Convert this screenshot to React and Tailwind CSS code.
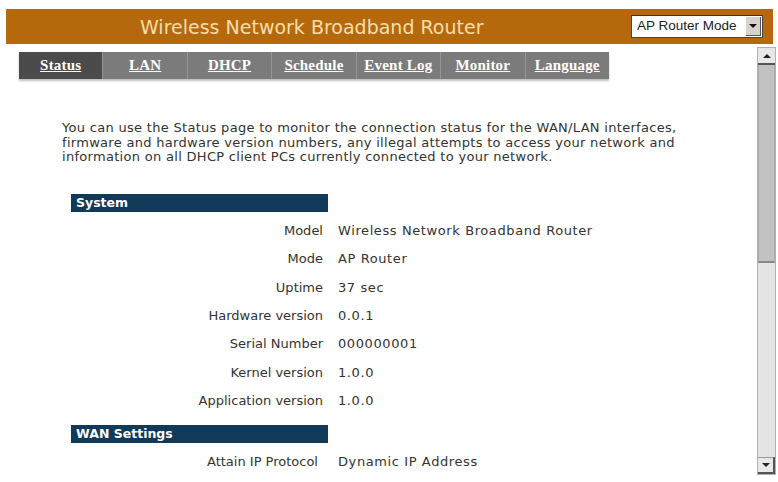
import React from 'react';

const tabs = ['Status', 'LAN', 'DHCP', 'Schedule', 'Event Log', 'Monitor', 'Language'];

const systemRows = [
  ['Model', 'Wireless Network Broadband Router'],
  ['Mode', 'AP Router'],
  ['Uptime', '37 sec'],
  ['Hardware version', '0.0.1'],
  ['Serial Number', '000000001'],
  ['Kernel version', '1.0.0'],
  ['Application version', '1.0.0'],
];

function SectionBar({ title }) {
  return (
    <div className="w-[257px] h-[18px] bg-[#10395a] pl-[5px] text-white font-bold text-[12.5px] leading-[18px]">
      {title}
    </div>
  );
}

function InfoRow({ label, value }) {
  return (
    <div className="flex h-[28.3px] items-center text-[13px] text-[#333]">
      <div className="w-[257px] pr-[5px] text-right">{label}</div>
      <div className="pl-[10px] tracking-[0.6px]">{value}</div>
    </div>
  );
}

function ScrollBar() {
  return (
    <div className="w-[19px] h-[428px] mt-[3px] flex flex-col border border-[#b0b0b0] bg-[#e6e6e6]">
      <div className="h-[17px] bg-[#e8e8e8] border-b-2 border-[#555] flex items-center justify-center">
        <div className="w-0 h-0 border-l-[4px] border-r-[4px] border-b-[4px] border-l-transparent border-r-transparent border-b-[#222]" />
      </div>
      <div className="h-[198px] bg-[#c2c2c2] border-x border-[#aaa] border-b-2 border-b-[#888]" />
      <div className="flex-1 bg-[#e4e4e4]" />
      <div className="h-[17px] bg-[#e8e8e8] border-t border-[#999] border-r-2 border-b-2 border-r-[#555] border-b-[#555] flex items-center justify-center">
        <div className="w-0 h-0 border-l-[4px] border-r-[4px] border-t-[4px] border-l-transparent border-r-transparent border-t-[#222]" />
      </div>
    </div>
  );
}

export default function App() {
  return (
    <div className="w-[778px] h-[482px] bg-white overflow-hidden pt-[9px]" style={{ fontFamily: '"DejaVu Sans", Verdana, sans-serif' }}>
      {/* top banner */}
      <div className="ml-[6px] w-[767px] h-[35px] bg-[#b5690c] flex items-center">
        <div className="pl-[134px] pt-[1px] text-[19px] text-[#f8ddab]">Wireless Network Broadband Router</div>
        <div className="ml-auto mr-[10px] w-[132px] h-[23px] bg-white border border-[#444] border-t-[#333] flex items-center">
          <span className="flex-1 pl-[5px] text-[13.5px] text-[#222]" style={{ fontFamily: '"Liberation Sans", Arial, sans-serif' }}>AP Router Mode</span>
          <div className="w-[15px] h-[19px] mr-[1px] bg-[#d6d3cc] border-r border-b border-[#555] flex items-center justify-center">
            <div className="w-0 h-0 border-l-[4px] border-r-[4px] border-t-[4px] border-l-transparent border-r-transparent border-t-[#111]" />
          </div>
        </div>
      </div>

      <div className="flex">
        <div className="flex-1">
          {/* nav tabs */}
          <div className="ml-[19px] mt-[8px] w-[590px] h-[27px] flex bg-[#7b7b7b] shadow-[0_2px_2px_rgba(0,0,0,0.25)]">
            {tabs.map((t, i) => (
              <div
                key={t}
                className={
                  'flex-1 flex items-center justify-center text-white font-bold underline text-[15px] tracking-[0.2px] ' +
                  (i === 0 ? 'bg-[#4b4b4b]' : 'border-l border-[#959595]')
                }
                style={{ fontFamily: '"Liberation Serif", "Times New Roman", serif' }}
              >
                {t}
              </div>
            ))}
          </div>

          <p className="ml-[62px] mt-[42px] text-[13px] leading-[14.6px] tracking-[0.3px] text-[#333]">
            You can use the Status page to monitor the connection status for the WAN/LAN interfaces,
            <br />
            firmware and hardware version numbers, any illegal attempts to access your network and
            <br />
            information on all DHCP client PCs currently connected to your network.
          </p>

          <div className="ml-[71px] mt-[29px]">
            <SectionBar title="System" />
            <div className="mt-[5px]">
              {systemRows.map(([l, v]) => (
                <InfoRow key={l} label={l} value={v} />
              ))}
            </div>
            <div className="mt-[10px]">
              <SectionBar title="WAN Settings" />
            </div>
            <div className="mt-[5px] flex h-[28px] items-center text-[13px] text-[#333]">
              <div className="w-[257px] pr-[10px] text-right">Attain IP Protocol</div>
              <div className="pl-[10px] tracking-[0.6px]">Dynamic IP Address</div>
            </div>
          </div>
        </div>
        <div className="mr-[2px]">
          <ScrollBar />
        </div>
      </div>
    </div>
  );
}
